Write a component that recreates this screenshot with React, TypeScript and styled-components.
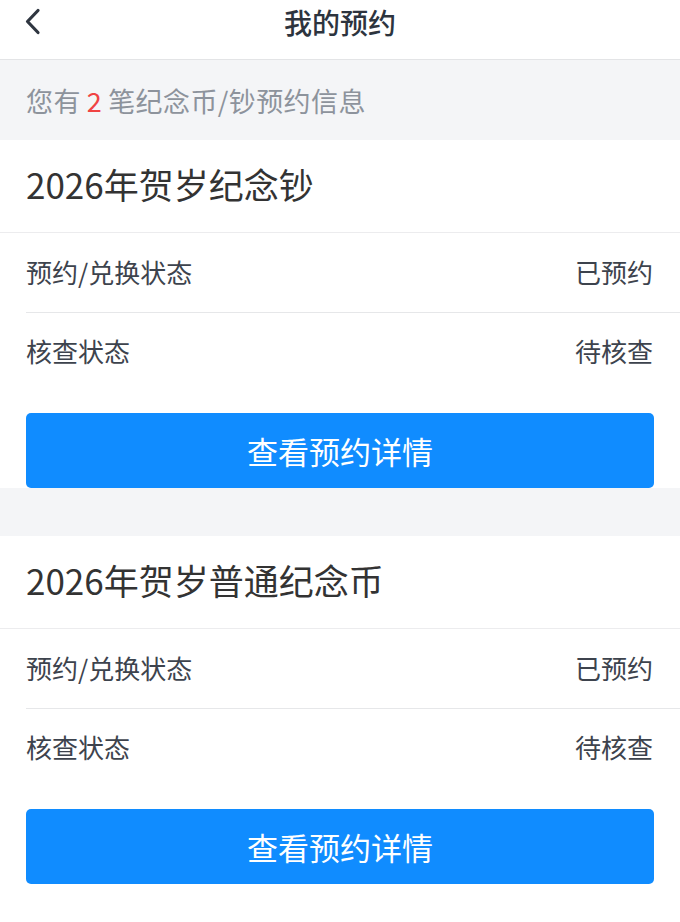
import React from "react";
import styled, { createGlobalStyle } from "styled-components";

const Global = createGlobalStyle`
  html, body { margin: 0; padding: 0; background: #ffffff; }
  body { font-family: "Noto Sans CJK SC", "Noto Sans", sans-serif; -webkit-font-smoothing: antialiased; }
  * { box-sizing: border-box; }
`;

const Page = styled.div`
  width: 680px;
  min-height: 922px;
  background: #ffffff;
  display: flex;
  flex-direction: column;
`;

const Header = styled.header`
  height: 60px;
  padding-bottom: 16px;
  border-bottom: 1px solid #e3e4e6;
  display: grid;
  grid-template-columns: 80px 1fr 80px;
  align-items: center;
  background: #ffffff;
`;

const BackButton = styled.button`
  border: 0;
  background: none;
  padding: 0 0 0 22px;
  height: 100%;
  display: flex;
  align-items: center;
  cursor: pointer;
`;

const Title = styled.h1`
  margin: 0;
  text-align: center;
  font-size: 28px;
  font-weight: 500;
  color: #2d343e;
  line-height: 1;
`;

const InfoBar = styled.div`
  height: 80px;
  background: #f4f5f7;
  padding: 0 26px;
  display: flex;
  align-items: center;
  font-size: 27px;
  letter-spacing: 0.4px;
  color: #8d939c;
`;

const Count = styled.span`
  color: #f04343;
  margin: 0 6px;
`;

const Card = styled.section`
  background: #ffffff;
  display: flex;
  flex-direction: column;
`;

const CardTitle = styled.div`
  height: 93px;
  padding: 0 26px 6px;
  display: flex;
  align-items: center;
  font-size: 35px;
  color: #333333;
  border-bottom: 1px solid #ececee;
`;

const Row = styled.div<{ $last?: boolean }>`
  height: 80px;
  margin-left: 26px;
  padding-right: 27px;
  padding-bottom: ${(p) => (p.$last ? "5px" : "2px")};
  display: flex;
  align-items: center;
  justify-content: space-between;
  font-size: 26px;
  color: #3d434d;
  border-bottom: ${(p) => (p.$last ? "none" : "1px solid #e6e7e9")};
`;

const DetailButton = styled.button`
  margin: 20px 26px 0;
  height: 75px;
  border: 0;
  border-radius: 5px;
  background: #108cff;
  color: #ffffff;
  font-family: inherit;
  font-size: 31px;
  display: flex;
  align-items: center;
  justify-content: center;
  cursor: pointer;
`;

const Gap = styled.div`
  height: 48px;
  background: #f4f5f7;
`;

const reservations = [
  { name: "2026年贺岁纪念钞", status: "已预约", check: "待核查" },
  { name: "2026年贺岁普通纪念币", status: "已预约", check: "待核查" },
];

export default function App() {
  return (
    <Page>
      <Global />
      <Header>
        <BackButton aria-label="返回">
          <svg width="22" height="28" viewBox="0 0 22 28">
            <path d="M16 2.5 L5.5 13.5 L16 24.5" fill="none" stroke="#2f3640" strokeWidth="3.2" strokeLinecap="round" strokeLinejoin="round" />
          </svg>
        </BackButton>
        <Title>我的预约</Title>
        <div />
      </Header>
      <InfoBar>
        您有<Count>2</Count>笔纪念币/钞预约信息
      </InfoBar>
      {reservations.map((r, i) => (
        <React.Fragment key={r.name}>
          {i > 0 && <Gap />}
          <Card>
            <CardTitle>{r.name}</CardTitle>
            <Row>
              <span>预约/兑换状态</span>
              <span>{r.status}</span>
            </Row>
            <Row $last>
              <span>核查状态</span>
              <span>{r.check}</span>
            </Row>
            <DetailButton>查看预约详情</DetailButton>
          </Card>
        </React.Fragment>
      ))}
    </Page>
  );
}
